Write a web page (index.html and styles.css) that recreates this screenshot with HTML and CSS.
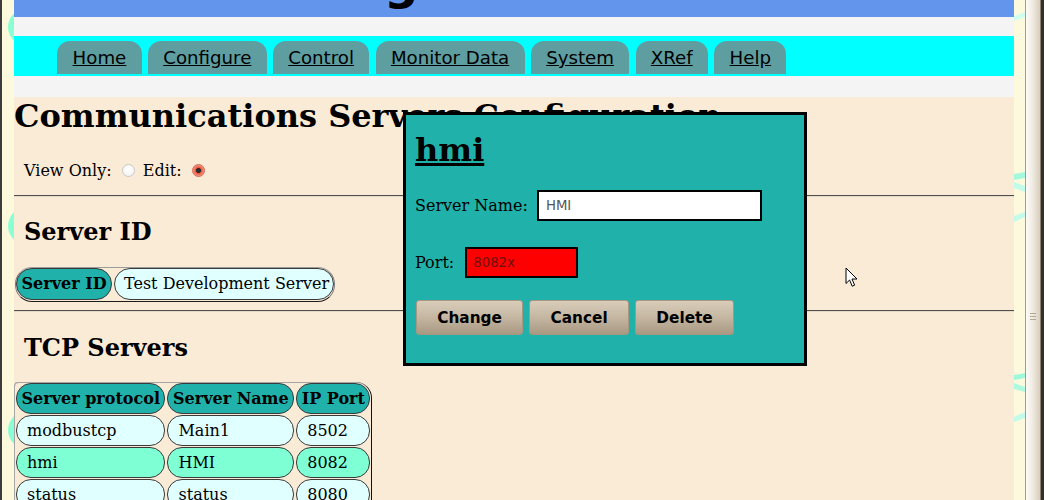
FILE: index.html
```html
<!DOCTYPE html>
<html lang="en">
<head>
<meta charset="utf-8">
<title>Communications Servers Configuration</title>
<link rel="stylesheet" href="styles.css">
</head>
<body>
<div class="frame">
  <div class="edge-left">
    <svg width="12" height="500" viewBox="0 0 12 500">
      <circle cx="24" cy="27" r="18" fill="#8affd4"/>
      <circle cx="25" cy="226" r="19" fill="#8affd4"/>
      <circle cx="25" cy="430" r="19" fill="#8affd4"/>
    </svg>
  </div>

  <div class="page">
    <header class="banner">
      <span class="banner-title">MBLogic</span>
    </header>
    <div class="band"></div>
    <nav class="tabs">
      <a class="tab" href="#">Home</a>
      <a class="tab" href="#">Configure</a>
      <a class="tab" href="#">Control</a>
      <a class="tab" href="#">Monitor Data</a>
      <a class="tab" href="#">System</a>
      <a class="tab" href="#">XRef</a>
      <a class="tab" href="#">Help</a>
    </nav>
    <div class="band band-low"></div>

    <main class="content">
      <h1 class="page-title">Communications Servers Configuration</h1>
      <div class="mode">View Only: <span class="radio"></span> Edit: <span class="radio radio-on"></span></div>
      <div class="rule"></div>

      <h2 class="section-title">Server ID</h2>
      <div class="idrow">
        <span class="pill pill-head">Server ID</span>
        <span class="pill pill-value">Test Development Server</span>
      </div>
      <div class="rule rule-2"></div>

      <h2 class="section-title section-tcp">TCP Servers</h2>
      <table class="servers">
        <thead>
          <tr><th>Server protocol</th><th>Server Name</th><th>IP Port</th></tr>
        </thead>
        <tbody>
          <tr><td>modbustcp</td><td>Main1</td><td>8502</td></tr>
          <tr class="selected"><td>hmi</td><td>HMI</td><td>8082</td></tr>
          <tr><td>status</td><td>status</td><td>8080</td></tr>
        </tbody>
      </table>
    </main>

    <div class="dialog">
      <h1 class="dialog-title">hmi</h1>
      <div class="field">
        <label class="field-label" for="sname">Server Name:</label>
        <input class="field-input" id="sname" type="text" value="HMI">
      </div>
      <div class="field field-port">
        <label class="field-label" for="sport">Port:</label>
        <input class="field-input field-error" id="sport" type="text" value="8082x">
      </div>
      <div class="actions">
        <button class="btn" type="button">Change</button>
        <button class="btn" type="button">Cancel</button>
        <button class="btn" type="button">Delete</button>
      </div>
    </div>

    <svg class="pointer" width="14" height="22" viewBox="0 0 14 22">
      <path d="M1 1 L1 16.5 L4.6 13 L7.2 19.2 L9.6 18.2 L7 12 L12 12 Z" fill="#fff" stroke="#000" stroke-width="1" stroke-linejoin="round"/>
    </svg>
  </div>

  <div class="edge-right">
    <svg width="11" height="500" viewBox="0 0 11 500">
      <polygon points="0,16 11,12 11,17 0,21" fill="#cffdee"/>
      <polygon points="0,174 11,172 11,178 0,180" fill="#a4f9dc"/>
      <polygon points="0,182 11,186 11,192 0,188" fill="#c2fbe9"/>
      <polygon points="0,216 11,212 11,217 0,222" fill="#c2fbe9"/>
      <polygon points="0,375 11,373 11,378 0,380" fill="#9ff8da"/>
      <polygon points="0,383 11,387 11,392 0,389" fill="#aff9e0"/>
      <polygon points="0,417 11,412 11,418 0,422" fill="#c2fbe9"/>
    </svg>
  </div>
  <div class="scrollbar"><span class="grip"></span></div>
  <div class="frame-end"></div>
</div>
</body>
</html>
```

FILE: styles.css
```css
* {
  box-sizing: border-box;
}

html,
body {
  margin: 0;
  height: 500px;
  overflow: hidden;
}

body {
  font-family: "DejaVu Serif", serif;
  font-size: 16px;
  color: #000;
  background: #faebd7;
}

.frame {
  display: flex;
  height: 500px;
}

/* window edges */
.edge-left {
  flex: none;
  width: 14px;
  border-left: 2px solid #3d3d3d;
  background: #fdf9dc;
  overflow: hidden;
}

.edge-left svg,
.edge-right svg {
  display: block;
}

.edge-right {
  flex: none;
  width: 11px;
  background: #fdf9dc;
  overflow: hidden;
}

.scrollbar {
  flex: none;
  width: 16px;
  border-left: 1px solid #a89c84;
  border-right: 1px solid #8f8572;
  background: linear-gradient(to right, #fdfcf9, #f1ece3 45%, #d8cebd);
  display: flex;
  flex-direction: column;
  align-items: center;
}

.grip {
  margin-top: 313px;
  width: 6px;
  height: 7px;
  background: repeating-linear-gradient(to bottom, #b3a894 0 1px, transparent 1px 3px);
}

.frame-end {
  flex: none;
  width: 3px;
  background: #2f2f2f;
}

/* page */
.page {
  flex: none;
  width: 1000px;
  position: relative;
  overflow: hidden;
  background: #faebd7;
}

.banner {
  height: 17px;
  background: #6495ed;
  overflow: hidden;
}

.banner-title {
  display: block;
  margin-top: -42px;
  padding-left: 222px;
  font: bold 48px/48px "DejaVu Sans", sans-serif;
  white-space: nowrap;
}

.band {
  height: 19px;
  background: #f4f4f4;
}

.band-low {
  height: 21px;
}

.tabs {
  height: 40px;
  background: #00ffff;
  display: flex;
  gap: 6.3px;
  padding: 5px 0 0 43.3px;
}

.tab {
  height: 33px;
  padding: 0 15.3px;
  border-radius: 13px 13px 0 0;
  background: #5f9ea0;
  color: #000;
  font: 18.2px/33px "DejaVu Sans", sans-serif;
  text-decoration: underline;
  white-space: nowrap;
}

/* content */
.page-title {
  margin: 0;
  padding-top: 1px;
  font-size: 32px;
  line-height: 37px;
  font-weight: bold;
  white-space: nowrap;
}

.mode {
  margin-top: 26px;
  padding-left: 10px;
  line-height: 19px;
  height: 19px;
}

.radio {
  display: inline-block;
  width: 13px;
  height: 13px;
  margin: 0 3px 0 5px;
  border-radius: 50%;
  border: 1px solid #c9c9c9;
  background: radial-gradient(circle at 50% 35%, #ffffff, #f1f1f1);
  vertical-align: -1px;
}

.radio-on {
  border-color: #d9634f;
  background: radial-gradient(circle, #2c2c2c 0 2.2px, #e2533d 2.8px, #f07d66 4.5px, #f6b4a6 6.5px);
}

.rule {
  margin-top: 15px;
  height: 2px;
  border-top: 1px solid #4f4f4f;
  border-bottom: 1px solid #e6d9c6;
}

.rule-2 {
  margin-top: 8px;
}

.section-title {
  margin: 21px 0 0;
  padding-left: 10px;
  font-size: 24px;
  line-height: 28px;
  font-weight: bold;
}

.section-tcp {
  margin-top: 22px;
}

.idrow {
  display: inline-flex;
  gap: 2px;
  margin: 21px 0 0 1px;
  padding: 0 0 1px;
  border: 1px solid #7b7b7b;
  border-top-color: #9c9c9c;
  border-bottom-color: #1c1c1c;
  border-radius: 17px;
}

.pill {
  height: 32px;
  line-height: 30px;
  border: 1px solid #3a3a3a;
  border-radius: 16px;
  white-space: nowrap;
}

.pill-head {
  padding: 0 4.5px;
  background: #20b2aa;
  font-weight: bold;
}

.pill-value {
  padding: 0 4px 0 9px;
  background: #e0ffff;
}

/* TCP servers table */
.servers {
  margin-top: 20px;
  border-collapse: separate;
  border-spacing: 2px 1px;
  border-radius: 4px 16px 0 0;
  box-shadow: inset 1px 1px 0 #a6a6a6, inset -1px 0 0 #111;
}

.servers th,
.servers td {
  height: 31px;
  border: 1px solid #3a3a3a;
  border-radius: 15px;
  line-height: 19px;
  white-space: nowrap;
}

.servers th {
  padding: 5px 4.5px;
  background: #20b2aa;
  font-weight: bold;
  text-align: center;
}

.servers td {
  padding: 5px 10px;
  background: #e0ffff;
  text-align: left;
}

.servers .selected td {
  background: #7fffd4;
}

/* dialog overlay */
.dialog {
  position: absolute;
  left: 389px;
  top: 112px;
  width: 404px;
  height: 254px;
  border: 3px solid #000;
  background: #20b2aa;
  padding: 17px 9px 0;
}

.dialog-title {
  margin: 0;
  font-size: 32px;
  line-height: 37px;
  font-weight: bold;
  text-decoration: underline;
}

.field {
  display: flex;
  align-items: center;
  height: 31px;
  margin-top: 21px;
}

.field-port {
  margin-top: 26px;
}

.field-label {
  font-size: 16px;
  margin-right: 9px;
}

.field-port .field-label {
  margin-right: 11px;
}

.field-input {
  height: 31px;
  width: 225px;
  border: 2px solid #000;
  border-radius: 0;
  background: #fff;
  padding: 0 7px;
  font: 13.3px "DejaVu Sans", sans-serif;
  color: #555;
  outline: none;
}

.field-error {
  width: 113px;
  padding: 0 6px;
  background: #ff0000;
  color: #6e0f0f;
}

.actions {
  display: flex;
  gap: 6.3px;
  margin: 22px 0 0 1px;
}

.btn {
  height: 35px;
  padding: 0 20.2px;
  border: 1px solid #a69781;
  border-radius: 3px;
  background: linear-gradient(to bottom, #d9cdbb, #c4b6a1 50%, #a99983);
  font: bold 15.3px "DejaVu Sans", sans-serif;
  color: #000;
}

.pointer {
  position: absolute;
  left: 831px;
  top: 267px;
}
```
